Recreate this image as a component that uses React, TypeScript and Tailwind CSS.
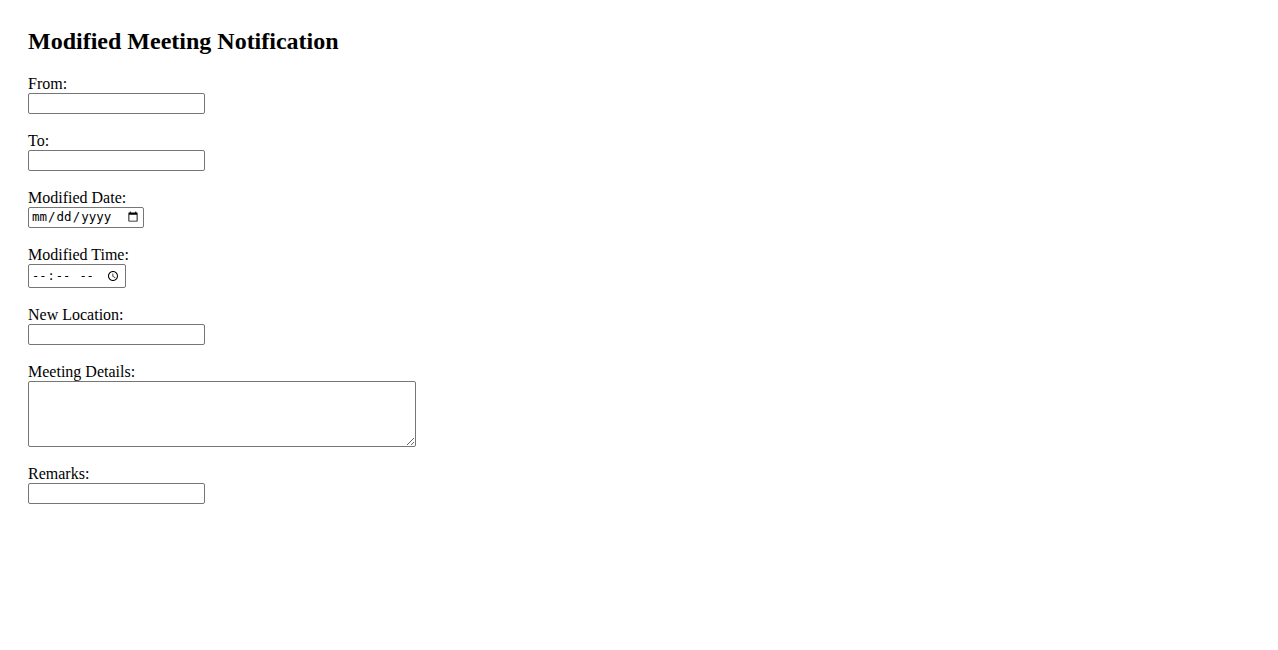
import React from 'react'

const inputBase =
  'block border border-[#767676] rounded-[2px] bg-white px-[2px] py-[1px] text-black outline-none'

function Field({ label, children }: { label: string; children: React.ReactNode }) {
  return (
    <div className="mb-[18px]">
      <label className="block h-[18px] leading-[18px]">{label}</label>
      {children}
    </div>
  )
}

export default function App(): React.JSX.Element {
  return (
    <div className="min-h-screen bg-white px-7 pt-7 text-base text-black font-['Liberation_Serif','Times_New_Roman',serif]">
      <h2 className="mb-5 text-2xl font-bold leading-[27px]">Modified Meeting Notification</h2>
      <form>
        <Field label="From:">
          <input type="text" className={`${inputBase} text-[13.33px] w-[177px] h-[21px]`} />
        </Field>
        <Field label="To:">
          <input type="text" className={`${inputBase} text-[13.33px] w-[177px] h-[21px]`} />
        </Field>
        <Field label="Modified Date:">
          <input
            type="date"
            className={`${inputBase} w-[116px] h-[21px] font-['DejaVu_Sans_Mono',monospace] text-[12.5px]`}
          />
        </Field>
        <Field label="Modified Time:">
          <input
            type="time"
            className={`${inputBase} w-[98px] h-[24px] font-['DejaVu_Sans_Mono',monospace] text-[12px]`}
          />
        </Field>
        <Field label="New Location:">
          <input type="text" className={`${inputBase} text-[13.33px] w-[177px] h-[21px]`} />
        </Field>
        <Field label="Meeting Details:">
          <textarea className={`${inputBase} text-[13.33px] w-[388px] h-[66px] resize`} />
        </Field>
        <Field label="Remarks:">
          <input type="text" className={`${inputBase} text-[13.33px] w-[177px] h-[21px]`} />
        </Field>
      </form>
    </div>
  )
}
